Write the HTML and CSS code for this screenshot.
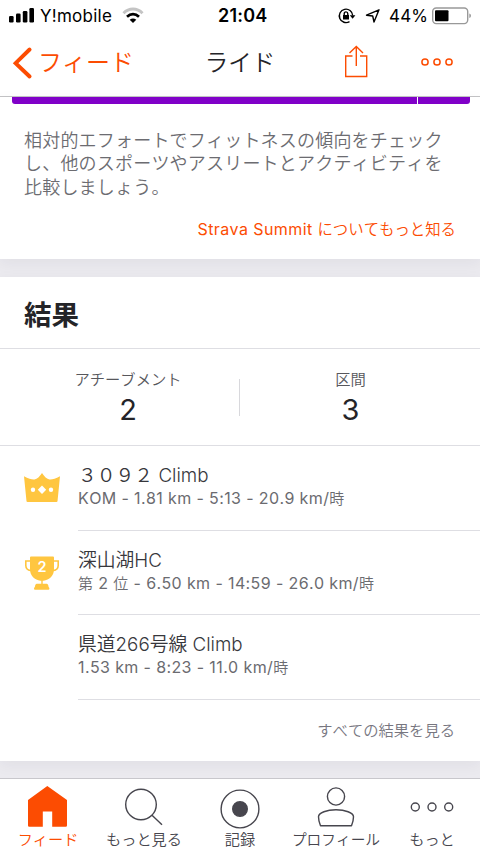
FILE: index.html
```html
<!DOCTYPE html>
<html lang="ja">
<head>
<meta charset="utf-8">
<title>ライド</title>
<link rel="stylesheet" href="styles.css">
</head>
<body>
<div class="app">
  <header class="status">
    <svg class="signal" width="26" height="16" viewBox="0 0 26 16"><g fill="#000"><rect x="0" y="8" width="4.6" height="6.5" rx="1.2"/><rect x="7" y="5.5" width="4.6" height="9" rx="1.2"/><rect x="13.8" y="3" width="4.6" height="11.5" rx="1.2"/><rect x="20.4" y="0" width="4.6" height="14.5" rx="1.2"/></g></svg>
    <span class="carrier">Y!mobile</span>
    <svg class="wifi" width="22" height="16" viewBox="0 0 22 16" fill="none"><path d="M1.5 5.2C7-.3 15-.3 20.5 5.2" stroke="#c4c4c4" stroke-width="3"/><path d="M5 8.8c3.7-3.5 8.300-3.500 12 0" stroke="#000" stroke-width="2.700"/><path d="M7.700 11.800Q11 9.300 14.300 11.800L11 15z" fill="#000"/></svg>
    <span class="clock">21:04</span>
    <svg class="lock" width="18" height="16" viewBox="0 0 18 16" fill="none" stroke="#000" stroke-width="1.400"><path d="M11.500 13.600A6.700 6.700 0 1 1 14.700 7.500"/><path d="M11.800 7.200h5.600l-2.800 3.500z" fill="#000" stroke="none"/><rect x="5" y="7" width="6" height="4.500" fill="#000" stroke="none"/><path d="M6.200 7V5.700a1.800 1.800 0 0 1 3.600 0V7"/></svg>
    <svg class="arrow" width="16" height="16" viewBox="0 0 16 16" fill="none" stroke="#000" stroke-width="1.400" stroke-linejoin="round"><path d="M1.500 7.200L14 1.800 9 14 7.700 8z"/></svg>
    <span class="percent">44%</span>
    <svg class="battery" width="40" height="18" viewBox="0 0 40 18"><rect x=".7" y="1" width="35" height="15.600" rx="3.500" fill="none" stroke="#999" stroke-width="1.400"/><rect x="3" y="3.300" width="13.500" height="11" rx="1" fill="#000"/><path d="M37.300 6.500q1.700.5 1.700 2.300t-1.700 2.300z" fill="#999"/></svg>
  </header>
  <nav class="navbar">
    <div class="back">
      <svg width="20" height="34" viewBox="0 0 20 34" fill="none" stroke="#fc4c02" stroke-width="3.900" stroke-linecap="round" stroke-linejoin="miter"><path d="M17.600 3.500L3.600 17.200l14 13.300"/></svg>
      <span>フィード</span>
    </div>
    <h1>ライド</h1>
    <div class="actions">
      <svg class="share" width="24" height="34" viewBox="0 0 24 34" fill="none" stroke="#fc4c02" stroke-width="1.400"><path d="M8.500 12H1.700v20.500h21V12H16M12.300 22V3M5.500 9l6.800-6.500L19 9"/></svg>
      <svg width="34" height="10" viewBox="0 0 34 10" fill="none" stroke="#fc4c02" stroke-width="1.500"><circle cx="5" cy="5" r="3.100"/><circle cx="17" cy="5" r="3.100"/><circle cx="29" cy="5" r="3.100"/></svg>
    </div>
  </nav>
  <main>
    <section class="card effort">
      <div class="meter"><i></i><i></i></div>
      <p>相対的エフォートでフィットネスの傾向をチェック<br>し、他のスポーツやアスリートとアクティビティを<br>比較しましょう。</p>
      <a class="learn"><span class="latin">Strava Summit </span>についてもっと知る</a>
    </section>
    <section class="card results">
      <h2>結果</h2>
      <div class="stats">
        <div class="stat wide"><span>アチーブメント</span><b>2</b></div>
        <div class="stat"><span>区間</span><b>3</b></div>
      </div>
      <ul>
        <li>
          <svg class="badge" width="38" height="34" viewBox="0 0 38 34"><path d="M1 6.300Q8 10 11.500 9.500 15.500 8.500 19 3q3.500 5.500 7.500 6.500 3.500.5 10.500-3.200L34.500 31.200q-.2.800-1 .8h-29q-.8 0-1-.8z" fill="#ffc640"/><g fill="#fff"><circle cx="10" cy="19.800" r="2.200"/><circle cx="28" cy="19.800" r="2.200"/><path d="M19 15.600l4.200 4.200-4.200 4.200-4.200-4.200z"/></g></svg>
          <div class="info"><h3>３０９２ Climb</h3><p>KOM - 1.81 km - 5:13 - 20.9 km/<span class="unit">時</span></p></div>
        </li>
        <li>
          <svg class="badge" width="38" height="38" viewBox="0 0 38 38"><path d="M7.500 6H2.800v4.500c0 3.500 2.400 5 6 5M30.500 6h4.700v4.500c0 3.500-2.400 5-6 5" fill="none" stroke="#ffc640" stroke-width="1.600"/><path d="M8 1.500h22q1 0 1 1V14c0 7-4.800 11-10.500 11.700h-.8v3.100h3.900c1.300.2 1.800 1.300 1.900 2.800 0 .7 1.100 1.200.9 2.200q-.1 1-1 1H12q-1 0-1-1c0-1 .8-1.400 1-2.200.1-1.500.6-2.600 1.800-2.800h4.500v-3.100h-.8C11.800 25 7 21 7 14V2.500q0-1 1-1z" fill="#ffc640"/><text x="19" y="16.500" text-anchor="middle">2</text></svg>
          <div class="info"><h3>深山湖HC</h3><p><span class="unit">第</span> 2 <span class="unit">位</span> - 6.50 km - 14:59 - 26.0 km/<span class="unit">時</span></p></div>
        </li>
        <li>
          <div class="badge"></div>
          <div class="info"><h3>県道266号線 Climb</h3><p>1.53 km - 8:23 - 11.0 km/<span class="unit">時</span></p></div>
        </li>
      </ul>
      <a class="all">すべての結果を見る</a>
    </section>
  </main>
  <footer class="tabs">
    <div class="tab active"><svg width="48" height="48" viewBox="0 0 48 48"><path d="M23.300 7L43 21v25.400q0 1.300-1.300 1.300H28.200V32.500h-9.400v15.200H5.300Q4 47.700 4 46.400V21z" fill="#fc4c02"/></svg><span>フィード</span></div>
    <div class="tab"><svg width="48" height="48" viewBox="0 0 48 48"><circle cx="21" cy="25.500" r="15.300"/><path d="M32 36.300l10 9.500"/></svg><span>もっと見る</span></div>
    <div class="tab"><svg width="48" height="48" viewBox="0 0 48 48"><circle cx="24" cy="30" r="18.900"/><circle cx="24" cy="30" r="7.300" fill="#47464e"/></svg><span>記録</span></div>
    <div class="tab"><svg width="48" height="48" viewBox="0 0 48 48"><circle cx="24" cy="17.500" r="8.600"/><path d="M8.500 46.800q-2-4.800-2-9c0-4.200 8.500-7 17.500-7s17.500 2.800 17.500 7q0 4.200-2 9z" stroke-linejoin="round"/></svg><span class="profile">プロフィール</span></div>
    <div class="tab"><svg width="48" height="48" viewBox="0 0 48 48"><circle cx="7.300" cy="28" r="4"/><circle cx="24" cy="28" r="4"/><circle cx="40.700" cy="28" r="4"/></svg><span>もっと</span></div>
  </footer>
</div>
</body>
</html>
```
FILE: styles.css
```css
* { box-sizing: border-box; margin: 0; padding: 0; }
body { background: #fff; font-family: Inter, "Noto Sans CJK JP", sans-serif; font-weight: 400; font-kerning: none; color: #242428; }
svg { display: block; flex: none; overflow: visible; }
span, h3, p, a { white-space: nowrap; }
.app { width: 480px; height: 852px; overflow: hidden; display: flex; flex-direction: column; background: #ebeaef; }

.status { height: 32px; background: #fff; display: flex; align-items: center; padding-left: 9px; color: #000; font-size: 17px; line-height: 32px; }
.signal { margin-right: 5px; }
.carrier { width: 82px; letter-spacing: .25px; }
.wifi { margin-right: 74px; }
.clock { width: 120px; font-weight: 600; font-size: 18px; letter-spacing: .2px; }
.lock { margin-right: 9px; }
.arrow { margin-right: 8px; }
.percent { width: 43px; letter-spacing: .2px; }

.navbar { height: 65px; background: #fff; border-bottom: 1px solid #c4c4c6; display: grid; grid-template-columns: 180px 120px 180px; align-items: center; font-weight: 350; padding-bottom: 2px; }
.back { display: flex; align-items: center; padding-left: 12px; color: #fc4c02; font-size: 24px; line-height: 34px; }
.back span { margin-left: 6px; }
h1 { font-size: 23.500px; line-height: 34px; font-weight: 350; text-align: center; }
.actions { display: flex; align-items: center; padding: 0 0 2px 44px; gap: 52px; }
.share { margin-top: -2px; }

main { height: 681px; display: flex; flex-direction: column; gap: 18px; }
.card { background: #fff; box-shadow: 0 4px 14px rgba(40, 40, 60, .055); }
.effort { height: 162px; }
.meter { height: 7px; margin: 0 10px 0 12px; display: flex; gap: 1px; overflow: hidden; border-radius: 0 0 3px 3px; }
.meter i { flex: none; width: 405px; background: #8000c8; }
.meter i + i { flex: 1; }
.effort p { margin: 25px 0 0 24px; font-size: 18px; letter-spacing: .2px; line-height: 23.400px; font-weight: 350; color: #6c6c71; }
.learn { display: block; text-align: right; padding-right: 24px; margin-top: 18px; font-size: 15.400px; line-height: 24px; font-weight: 350; color: #fc4c02; }
.latin { font-size: 16px; font-weight: 400; letter-spacing: .4px; white-space: pre; }

.results { height: 484px; }
h2 { height: 72px; padding: 1px 0 0 24px; font-size: 27.500px; line-height: 74px; font-weight: 700; border-bottom: 1px solid #dedee3; }
.stats { height: 97px; display: flex; border-bottom: 1px solid #dedee3; align-items: center; }
.stat { width: 240px; height: 37px; display: flex; flex-direction: column; align-items: center; justify-content: center; padding-right: 19px; }
.stat.wide { padding: 0 0 0 17px; border-right: 1px solid #d8d8dc; }
.stat span { font-size: 15.300px; line-height: 22px; margin-top: 3px; font-weight: 350; color: #57575c; }
.stat b { font-size: 29px; line-height: 37px; font-weight: 400; }
ul { list-style: none; }
li { height: 84.700px; display: flex; }
.badge { width: 38px; margin: 24px 17px 0 23px; flex: none; }
.badge text { font: 600 14.500px Inter, sans-serif; fill: #fff; }
.info { flex: 1; border-bottom: 1px solid #dedee3; padding-top: 17px; }
h3 { font-size: 18.800px; line-height: 25px; font-weight: 350; color: #37373c; }
.info p { font-size: 16px; line-height: 21px; letter-spacing: .38px; color: #6b6b70; }
.unit { font-size: 15px; font-weight: 350; }
.all { display: block; height: 60px; line-height: 61px; padding-right: 25px; text-align: right; font-size: 15.300px; color: #77767f; font-weight: 350; }

.tabs { height: 74px; flex: none; background: #fff; border-top: 1px solid #c8c7cc; display: grid; grid-template-columns: repeat(5, 96px); }
.tab { display: flex; flex-direction: column; align-items: center; color: #47464e; font-size: 15.200px; line-height: 26px; font-weight: 350; }
.tab svg { fill: none; stroke: #47464e; stroke-width: 1.400px; }
.tab.active { color: #fc4c02; }
.active svg { stroke: none; }
.profile { font-size: 14.700px; }
```
